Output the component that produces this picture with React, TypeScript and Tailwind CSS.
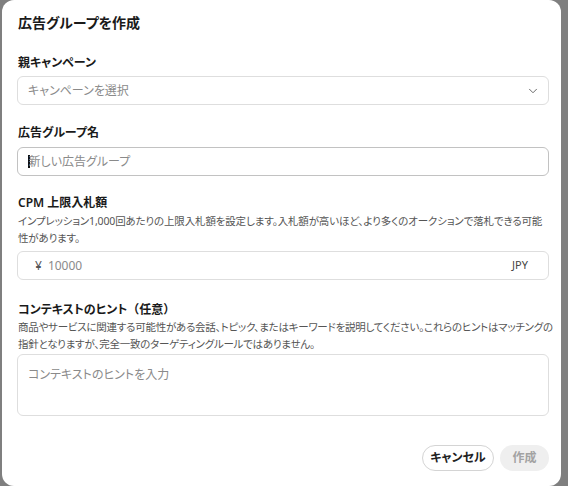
import { ChevronDown } from 'lucide-react';

const font = "[font-family:'Noto_Sans','Noto_Sans_CJK_JP',sans-serif] [font-feature-settings:'palt']";

const CreateAdGroupDialog = () => {
  return (
    <div className={`w-[568px] h-[486px] overflow-hidden bg-[#7f7f7f] pl-[2px] ${font}`}>
      <div className="w-[559px] h-[486px] rounded-[12px] bg-white pl-[15px] pr-[12px] pt-[13px]">
        {/* Title */}
        <h1 className="pl-[1px] text-[14px] leading-[20px] font-bold text-[#1a1a1a]">広告グループを作成</h1>

        {/* Parent campaign */}
        <div className="mt-[22px]">
          <label className="block pl-[1px] text-[12px] leading-[16px] font-semibold text-[#1a1a1a]">親キャンペーン</label>
          <div className="mt-[5px] h-[29px] flex items-center justify-between rounded-[6px] border border-[#dedede] pl-[10px] pr-[8px]">
            <span className="text-[12px] text-[#8a8a8a]">キャンペーンを選択</span>
            <ChevronDown size={14} strokeWidth={1.5} className="text-[#555]" />
          </div>
        </div>

        {/* Ad group name */}
        <div className="mt-[20px]">
          <label className="block pl-[1px] text-[12px] leading-[16px] font-semibold text-[#1a1a1a]">広告グループ名</label>
          <div className="mt-[6px] h-[29px] flex items-center rounded-[6px] border border-[#c2c2c2] pl-[10px]">
            <span className="w-[1.5px] h-[13px] bg-[#111]" />
            <span className="-ml-[1px] text-[12px] text-[#8a8a8a]">新しい広告グループ</span>
          </div>
        </div>

        {/* CPM */}
        <div className="mt-[19px]">
          <label className="block pl-[1px] text-[12px] leading-[16px] font-semibold text-[#1a1a1a]">CPM 上限入札額</label>
          <div className="mt-[2px] pl-[1px] text-[10.5px] leading-[17px] text-[#555] whitespace-nowrap tracking-[-0.15px]">
            <div>インプレッション1,000回あたりの上限入札額を設定します。入札額が高いほど、より多くのオークションで落札できる可能</div>
            <div>性があります。</div>
          </div>
          <div className="mt-[4px] h-[29px] flex items-center justify-between rounded-[6px] border border-[#dedede] pl-[17px] pr-[20px]">
            <span className="text-[12px] text-[#8a8a8a]">
              <span className="text-[#555] mr-[6px]">¥</span>10000
            </span>
            <span className="text-[11px] text-[#444]">JPY</span>
          </div>
        </div>

        {/* Context hints */}
        <div className="mt-[22px]">
          <label className="block pl-[1px] text-[12px] leading-[16px] font-semibold text-[#1a1a1a]">
            コンテキストのヒント<span className="[font-feature-settings:normal]">（任意）</span>
          </label>
          <div className="mt-[1px] pl-[1px] text-[10.5px] leading-[17px] text-[#555] whitespace-nowrap tracking-[-0.25px]">
            <div>商品やサービスに関連する可能性がある会話、トピック、またはキーワードを説明してください。これらのヒントはマッチングの</div>
            <div>指針となりますが、完全一致のターゲティングルールではありません。</div>
          </div>
          <div className="mt-[1px] h-[62px] rounded-[6px] border border-[#dedede] pl-[10px] pt-[6px]">
            <span className="text-[12px] text-[#8a8a8a]">コンテキストのヒントを入力</span>
          </div>
        </div>

        {/* Actions */}
        <div className="mt-[29px] flex justify-end gap-[6px]">
          <button className="h-[26px] w-[72px] rounded-full border border-[#d4d4d4] bg-white text-[12px] font-semibold text-[#222]">
            キャンセル
          </button>
          <button className="h-[26px] w-[49px] rounded-full bg-[#efefef] text-[12px] font-semibold text-[#a3a3a3]">
            作成
          </button>
        </div>
      </div>
    </div>
  );
};

export default function App() {
  return <CreateAdGroupDialog />;
}
